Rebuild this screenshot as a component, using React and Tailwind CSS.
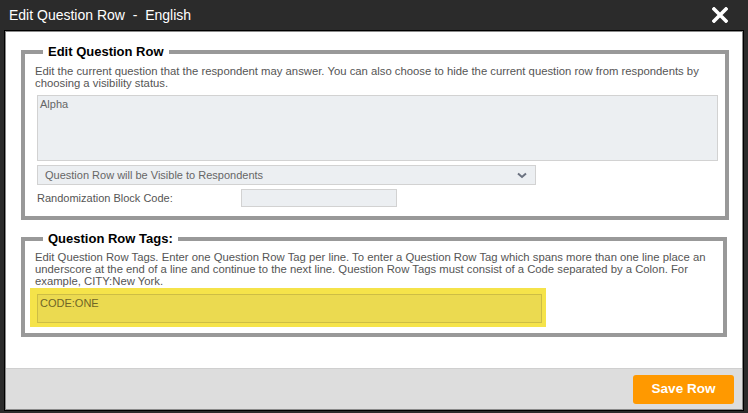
import React from 'react';

const CloseIcon = () => (
  <svg width="16" height="16" viewBox="0 0 16 16">
    <path d="M2 2 L14 14 M14 2 L2 14" stroke="#ffffff" strokeWidth="3.6" strokeLinecap="square" />
  </svg>
);

const Chevron = () => (
  <svg width="10" height="7" viewBox="0 0 10 7">
    <path d="M1 1.5 L5 5 L9 1.5" stroke="#6b7280" strokeWidth="2" fill="none" />
  </svg>
);

const Section = ({ title, className, children }) => (
  <fieldset className={`mx-[15px] border-4 border-[#999999] pl-[10px] pr-[7px] ${className}`}>
    <legend className="ml-[8px] px-[5px] text-[13px] font-bold leading-[16px] text-black">{title}</legend>
    {children}
  </fieldset>
);

export default function App() {
  return (
    <div className="flex h-[413px] w-[748px] flex-col bg-[#2b2b2b] font-['Liberation_Sans',Arial,sans-serif]">
      {/* title bar */}
      <div className="flex h-[30px] shrink-0 items-center justify-between pl-[9px] pr-[20px]">
        <span className="text-[14px] text-white whitespace-pre">Edit Question Row  -  English</span>
        <CloseIcon />
      </div>

      <div className="mx-[4px] mb-[2px] flex flex-1 flex-col border border-black">
        <div className="flex flex-1 flex-col border border-[#8a8a8a]">
          <div className="flex-1 bg-white">
            <Section title="Edit Question Row" className="mt-[12px] pt-[5px] pb-[9px]">
              <p className="text-[11.3px] leading-[12px] text-[#555]">
                Edit the current question that the respondent may answer. You can also choose to hide the current question row from respondents by choosing a visibility status.
              </p>
              <textarea
                readOnly
                defaultValue="Alpha"
                className="mt-[6px] ml-[2px] block h-[66px] w-[681px] resize-none border border-[#d2d2d2] bg-[#eceff2] px-[2px] pt-[1px] text-[11px] leading-[14px] text-[#666] outline-none"
              />
              <div className="relative mt-[4px] ml-[2px] flex h-[20px] w-[499px] items-center border border-[#d2d2d2] bg-[#eceff2] pl-[7px]">
                <span className="text-[11px] text-[#666]">Question Row will be Visible to Respondents</span>
                <span className="absolute right-[8px] top-[6px]"><Chevron /></span>
              </div>
              <div className="mt-[4px] ml-[2px] flex items-center">
                <span className="w-[204px] text-[11px] text-[#555]">Randomization Block Code:</span>
                <div className="h-[18px] w-[156px] border border-[#d2d2d2] bg-[#eceff2]" />
              </div>
            </Section>

            <Section title="Question Row Tags:" className="mt-[11px] pt-[4px] pb-[6px]">
              <p className="text-[11.3px] leading-[12px] text-[#555]">
                Edit Question Row Tags. Enter one Question Row Tag per line. To enter a Question Row Tag which spans more than one line place an underscore at the end of a line and continue to the next line. Question Row Tags must consist of a Code separated by a Colon. For example, CITY:New York.
              </p>
              <div className="mt-[1px] ml-[-5px] w-[516px] bg-[#f5e34a] pt-[6px] pb-[4px] pl-[7px] pr-[4px]">
                <textarea
                  readOnly
                  defaultValue="CODE:ONE"
                  className="block h-[29px] w-full resize-none border border-[#cdbd45] bg-[#ebda50] px-[2px] pt-[1px] text-[11px] leading-[14px] text-[#6f6527] outline-none"
                />
              </div>
            </Section>
          </div>

          <div className="flex h-[41px] shrink-0 items-center justify-end border-t border-[#cfcfcf] bg-[#dddddd] pr-[8px]">
            <button className="h-[29px] w-[101px] rounded-[3px] bg-[#ff9900] text-[13.5px] font-bold text-white">
              Save Row
            </button>
          </div>
        </div>
      </div>
    </div>
  );
}
